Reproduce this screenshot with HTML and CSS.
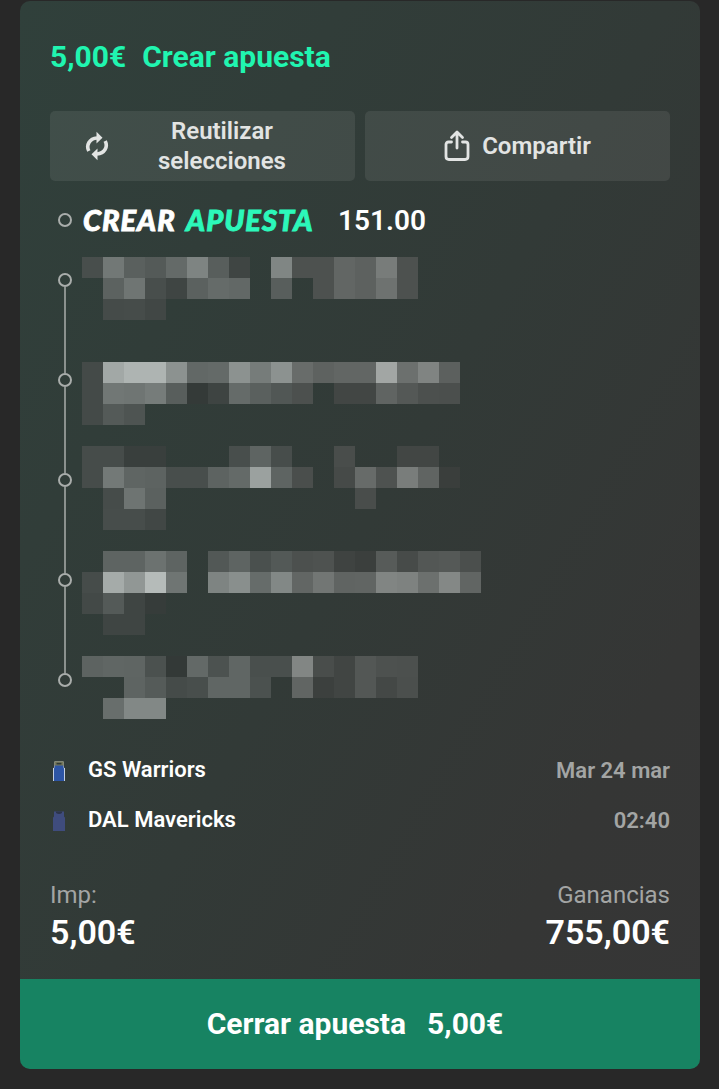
FILE: index.html
```html
<!DOCTYPE html>
<html lang="es">
<head>
    <meta charset="UTF-8">
    <title>Crear apuesta</title>
    <meta name="viewport" content="width=device-width, initial-scale=1.0">
    <link rel="stylesheet" href="styles.css">
</head>
<body>
    <div class="bet-card">
        <div class="bet-body">
            <h1 class="bet-title"><span>5,00€</span><span class="bet-type">Crear apuesta</span></h1>

            <!-- Actions -->
            <div class="actions">
                <button class="action reuse">
                    <svg class="icon-reuse" width="24" height="30" viewBox="0 0 24 30">
                        <path d="M3.800 20C.8 14 4.500 7.500 12 7" fill="none" stroke="#e2e4e3" stroke-width="3.600"/>
                        <path d="M11.500 .8L17.500 6.800L11.500 12.500z" fill="#e2e4e3"/>
                        <path d="M20.200 10C23.200 16 19.500 22.500 12 23" fill="none" stroke="#e2e4e3" stroke-width="3.600"/>
                        <path d="M12.500 17.500L6.500 23.200L12.500 29.200z" fill="#e2e4e3"/>
                    </svg>
                    <span class="reuse-label">Reutilizar selecciones</span>
                </button>
                <button class="action">
                    <svg class="icon-share" width="26" height="32" viewBox="0 0 26 32" fill="none" stroke="#e2e4e3" stroke-width="2.800" stroke-linecap="round" stroke-linejoin="round">
                        <path d="M7.500 12H4.500Q2 12 2 14.500V26.500Q2 29.500 5 29.500H21Q24 29.500 24 26.500V14.500Q24 12 21.500 12H18.500"/>
                        <path d="M13 18V2.500M7.500 7.500L13 2L18.500 7.500"/>
                    </svg>
                    <span>Compartir</span>
                </button>
            </div>

            <!-- Selections -->
            <div class="builder">
                <span class="node"></span>
                <span class="builder-logo">CREAR <em>APUESTA</em></span>
                <span class="odds">151.00</span>
            </div>
            <div class="selections">
                <div class="timeline">
                    <div class="leg"><span class="node"></span></div>
                    <div class="leg"><span class="node"></span></div>
                    <div class="leg"><span class="node"></span></div>
                    <div class="leg"><span class="node"></span></div>
                    <div class="leg"><span class="node"></span></div>
                </div>
                <div class="mosaic" id="mosaic"></div>
            </div>

            <!-- Match -->
            <div class="team-row">
                <svg class="shirt" width="14" height="22" viewBox="0 0 14 22">
                    <path d="M2.500 1.500H11.500V6Q12 8 13 8.500V21H1V8.500Q2 8 2.500 6z" fill="#e9eef0"/>
                    <path d="M3 5H11L12.200 9.500V21H1.800V9.500z" fill="#2d55a5"/>
                    <path d="M2.500 1.500H11.500V5.500H2.500z" fill="#77795a"/>
                    <path d="M4.500 2.800H9.500V4.500H4.500z" fill="#303a38"/>
                </svg>
                <span class="team">GS Warriors</span>
                <span class="when">Mar 24 mar</span>
            </div>
            <div class="team-row">
                <svg class="shirt" width="14" height="22" viewBox="0 0 14 22">
                    <path d="M2 1.500H12V6Q12 7 13 7.500V21H1V7.500Q2 7 2 6z" fill="#3f4c7d"/>
                    <path d="M4 1.500H10V3Q7 5 4 3z" fill="#2c3449"/>
                </svg>
                <span class="team">DAL Mavericks</span>
                <span class="when">02:40</span>
            </div>

            <!-- Stake and returns -->
            <div class="totals">
                <div>
                    <div class="label">Imp:</div>
                    <div class="amount">5,00€</div>
                </div>
                <div class="returns">
                    <div class="label">Ganancias</div>
                    <div class="amount">755,00€</div>
                </div>
            </div>
        </div>
        <button class="close-bet"><span>Cerrar apuesta</span><span class="close-amount">5,00€</span></button>
    </div>

    <script>
        // Brightness of each tile in hex, ".." leaves the tile empty
        const rows = [
            '4c 76 5e 58 68 82 5c 43 .. 84 4f 4f 64 5f 7a 4f',
            '.. 60 73 4c 43 5f 69 66 .. 5c .. 4f 64 5f 70 4f',
            '.. 49 4a 45',
            '',
            '',
            '48 a6 b2 b2 90 66 68 90 7a 90 6a 60 64 64 a4 6e 82 5e',
            '48 75 73 7a 5c 38 42 69 5e 55 4e .. 44 44 62 56 4e 4d',
            '48 58 52',
            '',
            '4a 4a 3d 3d .. .. .. 4c 62 4b .. .. 4b .. .. 44 44',
            '4a 77 63 61 4c 4c 61 68 9f 62 4c .. 48 69 50 7b 62 3c',
            '.. 4a 72 5f .. .. .. .. .. .. .. .. .. 4b',
            '.. 4b 4b 45',
            '',
            '.. 62 62 70 62 .. 56 62 4e 57 4e 50 41 3d 59 49 55 57 4d',
            '4a a9 95 b9 73 .. 82 8d 6a 86 64 74 62 63 83 80 6e 86 63',
            '47 58 43 3a',
            '.. 43 43',
            '',
            '61 64 63 4f 37 67 50 64 4d 4d 84 4b 43 55 4f 4e',
            '.. .. 62 59 49 4c 64 64 4f .. 63 3e 43 55 46 4d',
            '.. 6c 86 86'
        ];

        const mosaic = document.getElementById('mosaic');
        rows.forEach(row => {
            const line = document.createElement('div');
            line.className = 'mosaic-row';
            row.split(' ').forEach((value, i) => {
                const tile = document.createElement('span');
                tile.className = 'tile';
                if (value && value !== '..') {
                    const l = parseInt(value, 16);
                    // the green tint fades towards the right
                    const tint = i < 10 ? 4 : 2;
                    tile.style.backgroundColor = `rgb(${l - tint}, ${l + 2}, ${l})`;
                }
                line.appendChild(tile);
            });
            mosaic.appendChild(line);
        });
    </script>
</body>
</html>
```
FILE: styles.css
```css
* {
    box-sizing: border-box;
    margin: 0;
    padding: 0;
}

body {
    background-color: #282828;
    color: #ffffff;
    font-family: Roboto, sans-serif;
    height: 1089px;
    padding: 1px 19px 20px 20px;
    overflow: hidden;
}

button {
    border: none;
    font-family: inherit;
    cursor: pointer;
}

/* Card */
.bet-card {
    height: 1068px;
    display: flex;
    flex-direction: column;
    border-radius: 10px;
    overflow: hidden;
    background: linear-gradient(120deg, #30403b 0%, #323a37 50%, #353635 80%, #363636 100%);
}

.bet-body {
    flex: 1;
    padding: 36px 30px 0;
}

.bet-title {
    display: flex;
    gap: 16px;
    height: 74px;
    font-size: 30px;
    font-weight: 700;
    line-height: 40px;
    color: #20f5b0;
}

/* Action buttons */
.actions {
    display: grid;
    grid-template-columns: 1fr 1fr;
    gap: 10px;
}

.action {
    height: 70px;
    display: flex;
    align-items: center;
    justify-content: center;
    border-radius: 5px;
    background-color: rgba(255, 255, 255, 0.08);
    color: #e2e4e3;
    font-size: 24px;
    font-weight: 600;
    line-height: 30px;
}

.reuse {
    padding-right: 19px;
}

.icon-reuse {
    margin-right: 34px;
}

.reuse-label {
    width: 158px;
}

.icon-share {
    margin-right: 12px;
}

/* Selections */
.builder {
    display: flex;
    align-items: center;
    height: 76px;
    padding: 2px 0 0 8px;
}

.node {
    flex: none;
    width: 14px;
    height: 14px;
    border: 2px solid #a9adab;
    border-radius: 50%;
}

.builder-logo {
    width: 266px;
    padding: 0 0 2px 11px;
    font-family: Lato, sans-serif;
    font-size: 29px;
    font-weight: 900;
    font-style: italic;
    letter-spacing: 1px;
    word-spacing: 4px;
    white-space: nowrap;
    -webkit-text-stroke: 0.9px currentColor;
}

.builder-logo em {
    color: #2cf8ba;
}

.odds {
    font-size: 28px;
    font-weight: 600;
}

.selections {
    display: flex;
    height: 488px;
    padding-left: 8px;
}

.timeline {
    width: 24px;
    padding-top: 16px;
}

.leg {
    display: flex;
    flex-direction: column;
    width: 14px;
    height: 100px;
}

.leg:not(:last-child)::after {
    content: "";
    align-self: center;
    width: 2px;
    flex: 1;
    background-color: #8b918e;
}

.mosaic-row {
    display: flex;
    height: 21px;
}

.tile {
    width: 21px;
    height: 21px;
}

/* Match */
.team-row {
    display: flex;
    align-items: center;
    height: 50px;
    font-size: 22px;
    font-weight: 600;
}

.shirt {
    margin: 2px 22px 0 2px;
}

.team {
    padding-bottom: 2px;
}

.when {
    margin-left: auto;
    color: #a3a5a4;
}

/* Totals */
.totals {
    display: flex;
    justify-content: space-between;
    padding-top: 34px;
}

.returns {
    text-align: right;
}

.label {
    font-size: 24px;
    line-height: 32px;
    color: #a3a5a4;
}

.amount {
    font-size: 34px;
    font-weight: 600;
    line-height: 42px;
}

.close-bet {
    display: flex;
    align-items: center;
    justify-content: center;
    gap: 21px;
    height: 90px;
    padding: 0 10px 2px 0;
    background-color: #178362;
    color: #ffffff;
    font-size: 30px;
    font-weight: 700;
}
```
